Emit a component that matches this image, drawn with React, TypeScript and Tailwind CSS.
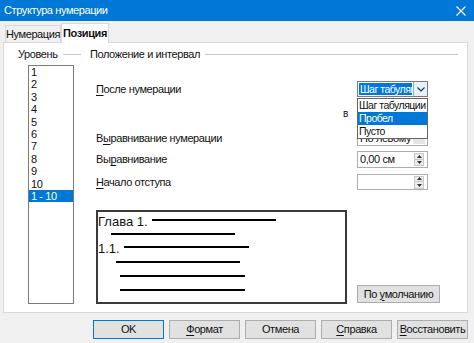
import React from 'react';

const ui = { fontFamily: '"Liberation Sans", Arial, sans-serif' };

function U({ children }: { children: React.ReactNode }) {
  return <span className="underline underline-offset-2 decoration-1">{children}</span>;
}

function ComboArrow() {
  return (
    <div className="w-[14px] h-full bg-[#e5f1fb] border-l border-[#7eb4ea] flex items-center justify-center">
      <svg width="8" height="5" viewBox="0 0 8 5">
        <path d="M0.5 0.5 L4 4 L7.5 0.5" fill="none" stroke="#1b3c66" strokeWidth="1.2" />
      </svg>
    </div>
  );
}

function Spin() {
  return (
    <div className="w-[10px] h-[13px] mr-[3px] border border-[#c8c8c8] bg-[#ececec] flex flex-col items-center justify-around">
      <svg width="5" height="3" viewBox="0 0 5 3"><path d="M0 3 L2.5 0 L5 3 Z" fill="#333" /></svg>
      <div className="w-full h-px bg-[#c8c8c8]" />
      <svg width="5" height="3" viewBox="0 0 5 3"><path d="M0 0 L2.5 3 L5 0 Z" fill="#333" /></svg>
    </div>
  );
}

function Btn({ children, primary }: { children: React.ReactNode; primary?: boolean }) {
  return (
    <div
      className={
        'w-[71px] h-[19px] flex items-center justify-center bg-[#e1e1e1] text-[11px] text-[#111] border ' +
        (primary ? 'border-[#0078d7]' : 'border-[#adadad]')
      }
    >
      {children}
    </div>
  );
}

const levels = ['1', '2', '3', '4', '5', '6', '7', '8', '9', '10', '1 - 10'];

export default function App() {
  return (
    <div
      className="w-[474px] h-[343px] bg-[#f0f0f0] flex flex-col overflow-hidden text-[#111] tracking-[-0.4px]"
      style={ui}
    >
      {/* title bar */}
      <div className="h-[21px] bg-[#0078d7] flex items-center justify-between pl-[4px] pr-[8px] text-white text-[11px]">
        <span>Структура нумерации</span>
        <svg width="10" height="10" viewBox="0 0 10 10">
          <path d="M0.5 0.5 L9.5 9.5 M9.5 0.5 L0.5 9.5" stroke="#fff" strokeWidth="1.2" />
        </svg>
      </div>

      {/* tabs */}
      <div className="flex items-end h-[21px] pl-[5px] text-[11px]">
        <div className="h-[17px] w-[56px] flex items-center justify-center border border-b-0 border-[#d9d9d9] bg-[#f0f0f0]">
          Нумерация
        </div>
        <div className="h-[20px] w-[48px] flex items-center justify-center border border-b-0 border-[#d9d9d9] bg-white font-bold relative top-px z-10">
          Позиция
        </div>
      </div>

      {/* panel */}
      <div className="ml-[3px] w-[465px] h-[271px] bg-white border border-[#d9d9d9] flex text-[11px]">
        {/* level column */}
        <div className="ml-[14px] w-[63px] flex flex-col pt-[4px]">
          <div className="flex items-center h-[15px]">
            <span>Уровень</span>
            <div className="ml-[5px] flex-1 h-px bg-[#c8c8c8]" />
          </div>
          <div className="ml-[10px] mt-[3px] w-[46px] h-[239px] border border-[#7a7a7a] flex flex-col">
            {levels.map((l) => (
              <div
                key={l}
                className={
                  'h-[12.4px] leading-[12.4px] pl-[2px] ' + (l === '1 - 10' ? 'bg-[#0078d7] text-white' : '')
                }
              >
                {l}
              </div>
            ))}
          </div>
        </div>

        {/* position column */}
        <div className="ml-[9px] flex-1 mr-[9px] flex flex-col pt-[4px] relative">
          <div className="flex items-center h-[15px]">
            <span>Положение и интервал</span>
            <div className="ml-[5px] flex-1 h-px bg-[#c8c8c8]" />
          </div>

          <div className="ml-[6px] mt-[19px] flex items-center h-[16px]">
            <span className="w-[261px]">
              <U>П</U>осле нумерации
            </span>
            <div className="w-[71px] h-[16px] border border-[#7a7a7a] flex">
              <div className="flex-1 m-px bg-[#0078d7] text-white text-[10.5px] tracking-[-0.5px] leading-[12px] pl-px overflow-hidden whitespace-nowrap">
                Шаг табуляц
              </div>
              <ComboArrow />
            </div>
          </div>

          <div className="ml-[6px] mt-[8px] flex items-center h-[16px]">
            <span className="w-[261px] text-right pr-[9px] text-[10px]">в</span>
            <div className="w-[71px] h-[16px] border border-[#adadad]" />
          </div>

          <div className="ml-[6px] mt-[9px] flex items-center h-[16px]">
            <span className="w-[261px]">
              В<U>ы</U>равнивание нумерации
            </span>
            <div className="w-[71px] h-[16px] border border-[#adadad] flex items-center">
              <span className="flex-1 pl-[2px] whitespace-nowrap overflow-hidden">По левому к</span>
              <div className="w-[12px] h-[12px] mr-[2px] bg-[#e5e5e5]" />
            </div>
          </div>

          <div className="ml-[6px] mt-[5px] flex items-center h-[17px]">
            <span className="w-[261px]">
              Вы<U>р</U>авнивание
            </span>
            <div className="w-[71px] h-[17px] border border-[#adadad] flex items-center">
              <span className="flex-1 pl-[2px]">0,00 см</span>
              <Spin />
            </div>
          </div>

          <div className="ml-[6px] mt-[6px] flex items-center h-[16px]">
            <span className="w-[261px]">
              <U>Н</U>ачало отступа
            </span>
            <div className="w-[71px] h-[16px] border border-[#adadad] flex items-center justify-end">
              <Spin />
            </div>
          </div>

          <div className="ml-[6px] mt-[20px] flex items-end">
            <div className="w-[251px] h-[94px] border-2 border-[#3a3a3a] flex flex-col text-[#111] tracking-normal">
              <div className="flex items-center h-[16px]">
                <span className="text-[13px] leading-[16px] relative top-[2px]">Глава 1.</span>
                <div className="ml-[4px] w-[124px] h-[2px] bg-black" />
              </div>
              <div className="ml-[13px] mt-[5px] w-[124px] h-[2px] bg-black" />
              <div className="flex items-center h-[16px] mt-[4px]">
                <span className="text-[13px] leading-[16px] relative top-[2px]">1.1.</span>
                <div className="ml-[4px] w-[125px] h-[2px] bg-black" />
              </div>
              <div className="ml-[18px] mt-[6px] w-[124px] h-[2px] bg-black" />
              <div className="ml-[22px] mt-[12px] w-[125px] h-[2px] bg-black" />
              <div className="ml-[22px] mt-[12px] w-[125px] h-[2px] bg-black" />
            </div>
            <div className="ml-[10px] mb-px w-[83px] h-[18px] bg-[#e1e1e1] border border-[#adadad] flex items-center justify-center">
              По&nbsp;<U>у</U>молчанию
            </div>
          </div>

          {/* open dropdown list */}
          <div className="absolute left-[267px] top-[55px] w-[71px] border border-[#646464] bg-white flex flex-col z-20 text-[10.5px] tracking-[-0.5px]">
            <div className="h-[13px] leading-[13px] pl-px whitespace-nowrap overflow-hidden">Шаг табуляции</div>
            <div className="h-[13px] leading-[13px] pl-px bg-[#0078d7] text-white">Пробел</div>
            <div className="h-[13px] leading-[13px] pl-px">Пусто</div>
          </div>
        </div>
      </div>

      {/* bottom buttons */}
      <div className="flex gap-[5px] pl-[93px] mt-[7px]">
        <Btn primary>OK</Btn>
        <Btn>
          <U>Ф</U>ормат
        </Btn>
        <Btn>Отмена</Btn>
        <Btn>
          <U>С</U>правка
        </Btn>
        <Btn>
          <U>В</U>осстановить
        </Btn>
      </div>
    </div>
  );
}
